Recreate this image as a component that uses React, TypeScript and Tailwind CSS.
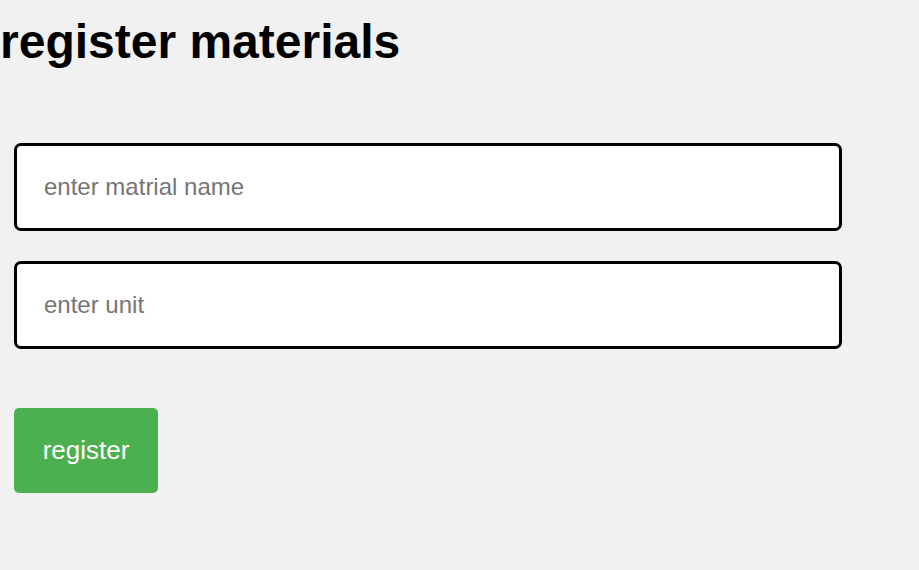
import React from "react";

export default function App() {
  return (
    <div className="min-h-[570px] w-full bg-[#f1f1f1] font-['Liberation_Sans',Arial,sans-serif]">
      <h1 className="pt-[14px] text-[48px] leading-[55px] font-bold text-black m-0">register materials</h1>
      <div className="pl-[14px] pt-[74px] flex flex-col">
        <input
          type="text"
          placeholder="enter matrial name"
          className="w-[828px] h-[88px] bg-white border-[3px] border-black rounded-[7px] pl-[27px] text-[24px] text-black placeholder:text-[#757575] outline-none"
        />
        <input
          type="text"
          placeholder="enter unit"
          className="mt-[30px] w-[828px] h-[88px] bg-white border-[3px] border-black rounded-[7px] pl-[27px] text-[24px] text-black placeholder:text-[#757575] outline-none"
        />
        <div className="mt-[59px]">
          <button className="w-[144px] h-[85px] bg-[#4caf50] text-white text-[26px] rounded-[5px] flex items-center justify-center">
            register
          </button>
        </div>
      </div>
    </div>
  );
}
